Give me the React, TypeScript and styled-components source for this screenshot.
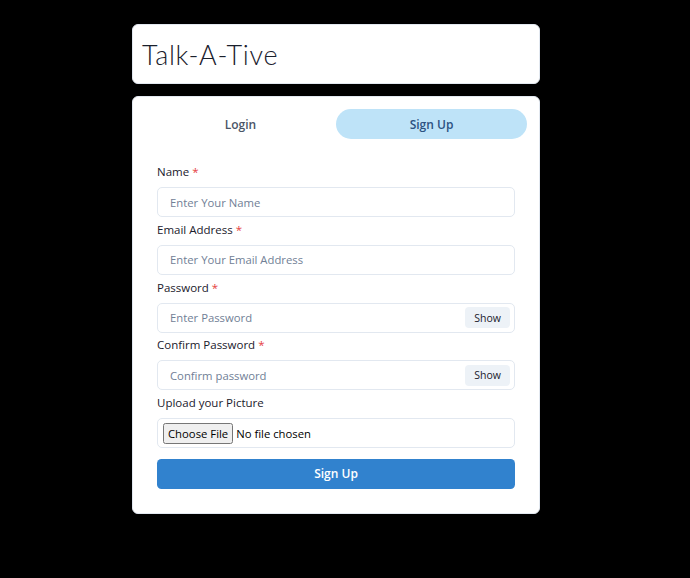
import React, { useState } from 'react';
import styled, { createGlobalStyle } from 'styled-components';

const GlobalStyle = createGlobalStyle`
  html, body {
    margin: 0;
    padding: 0;
    background: #000;
  }
  * {
    box-sizing: border-box;
  }
`;

const fields = [
  { id: 'name', label: 'Name', placeholder: 'Enter Your Name', type: 'text', toggle: false },
  { id: 'email', label: 'Email Address', placeholder: 'Enter Your Email Address', type: 'email', toggle: false },
  { id: 'password', label: 'Password', placeholder: 'Enter Password', type: 'password', toggle: true },
  { id: 'confirm', label: 'Confirm Password', placeholder: 'Confirm password', type: 'password', toggle: true },
];

export default function App() {
  const [tab, setTab] = useState(1);
  const [shown, setShown] = useState<Record<string, boolean>>({});

  return (
    <PAGE>
      <GlobalStyle />
      <CONTAINER>
        <HEADER_CARD>
          <TITLE>Talk-A-Tive</TITLE>
        </HEADER_CARD>
        <CARD>
          <TAB_LIST>
            <TAB selected={tab === 0} onClick={() => setTab(0)}>
              Login
            </TAB>
            <TAB selected={tab === 1} onClick={() => setTab(1)}>
              Sign Up
            </TAB>
          </TAB_LIST>
          <FORM onSubmit={(e) => e.preventDefault()}>
            {fields.map((f) => (
              <FIELD key={f.id}>
                <LABEL htmlFor={f.id}>
                  {f.label}
                  <REQUIRED>*</REQUIRED>
                </LABEL>
                <INPUT_GROUP>
                  <INPUT
                    id={f.id}
                    type={f.toggle && shown[f.id] ? 'text' : f.type}
                    placeholder={f.placeholder}
                    hasButton={f.toggle}
                  />
                  {f.toggle && (
                    <SHOW_BTN type="button" onClick={() => setShown({ ...shown, [f.id]: !shown[f.id] })}>
                      {shown[f.id] ? 'Hide' : 'Show'}
                    </SHOW_BTN>
                  )}
                </INPUT_GROUP>
              </FIELD>
            ))}
            <FIELD>
              <LABEL htmlFor="pic">Upload your Picture</LABEL>
              <FILE_BOX>
                <FILE_INPUT id="pic" type="file" accept="image/*" />
              </FILE_BOX>
            </FIELD>
            <SUBMIT type="submit">Sign Up</SUBMIT>
          </FORM>
        </CARD>
      </CONTAINER>
    </PAGE>
  );
}

const PAGE = styled.div`
  min-height: 578px;
  background: #000;
  padding: 24px 18px 0 0;
  display: flex;
  justify-content: center;
  font-family: 'Open Sans', 'Noto Sans', sans-serif;
`;

const CONTAINER = styled.div`
  width: 408px;
  display: flex;
  flex-direction: column;
  gap: 12px;
`;

const HEADER_CARD = styled.div`
  background: #fff;
  border-radius: 6px;
  border: 1px solid #e2e8f0;
  height: 60px;
  padding: 0 9px;
  display: flex;
  align-items: center;
`;

const TITLE = styled.h1`
  margin: 0;
  font-family: 'Lato', 'Open Sans', sans-serif;
  font-weight: 300;
  font-size: 27px;
  letter-spacing: 0.7px;
  color: #1a202c;
`;

const CARD = styled.div`
  background: #fff;
  border-radius: 6px;
  border: 1px solid #e2e8f0;
  padding: 12px 12px 24px;
`;

const TAB_LIST = styled.div`
  display: grid;
  grid-template-columns: 1fr 1fr;
  margin-bottom: 24px;
`;

const TAB = styled.button<{ selected: boolean }>`
  height: 30px;
  border: none;
  border-radius: 999px;
  cursor: pointer;
  font-family: inherit;
  font-size: 12px;
  font-weight: 600;
  color: ${({ selected }) => (selected ? '#2c5282' : '#4a5568')};
  background: ${({ selected }) => (selected ? '#bee3f8' : 'transparent')};
`;

const FORM = styled.form`
  padding: 0 12px;
  display: flex;
  flex-direction: column;
  gap: 3.75px;
`;

const FIELD = styled.div`
  display: flex;
  flex-direction: column;
`;

const LABEL = styled.label`
  font-size: 11.5px;
  font-weight: 500;
  line-height: 18px;
  color: #1a202c;
  margin-bottom: 6px;
`;

const REQUIRED = styled.span`
  color: #e53e3e;
  margin-left: 3px;
`;

const INPUT_GROUP = styled.div`
  position: relative;
  display: flex;
`;

const INPUT = styled.input<{ hasButton: boolean }>`
  width: 100%;
  height: 30px;
  border: 1px solid #e2e8f0;
  border-radius: 5px;
  padding: 0 ${({ hasButton }) => (hasButton ? '54px' : '12px')} 0 12px;
  font-family: inherit;
  font-size: 11.3px;
  color: #1a202c;
  outline: none;

  &::placeholder {
    color: #718096;
  }
`;

const SHOW_BTN = styled.button`
  position: absolute;
  right: 5px;
  top: 4.5px;
  height: 21px;
  padding: 0 9px;
  border: none;
  border-radius: 4px;
  background: #edf2f7;
  font-family: inherit;
  font-size: 10.5px;
  font-weight: 500;
  color: #1a202c;
  cursor: pointer;
`;

const FILE_BOX = styled.div`
  height: 30px;
  border: 1px solid #e2e8f0;
  border-radius: 5px;
  padding: 0 5px;
  display: flex;
  align-items: center;
`;

const FILE_INPUT = styled.input`
  font-family: 'Open Sans', sans-serif;
  font-size: 11.3px;
  color: #000;

  &::file-selector-button {
    font-family: inherit;
    font-size: 11.3px;
    margin-right: 3px;
    padding: 1px 3px;
  }
`;

const SUBMIT = styled.button`
  margin-top: 7px;
  height: 30px;
  width: 100%;
  border: none;
  border-radius: 4.5px;
  background: #3182ce;
  color: #fff;
  font-family: inherit;
  font-size: 12px;
  font-weight: 600;
  cursor: pointer;
`;
